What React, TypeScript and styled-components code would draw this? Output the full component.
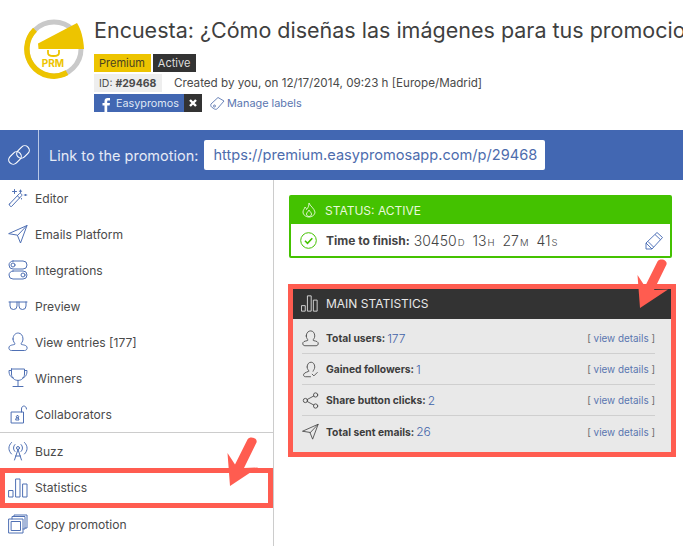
import React from 'react'
import styled, { createGlobalStyle } from 'styled-components'

const GlobalStyle = createGlobalStyle`
    html, body {
        margin: 0;
        padding: 0;
        background: #fff;
        overflow: hidden;
    }
    body {
        font-family: "Inter", "Liberation Sans", sans-serif;
        color: #444;
    }
`

const BLUE = '#4267b2'
const RED = '#ff5c50'

const Page = styled.div`
    position: relative;
    width: 683px;
    height: 546px;
    overflow: hidden;
`

const Header = styled.header`
    height: 130px;
    box-sizing: border-box;
    padding: 19px 0 0 24px;
    display: flex;
    gap: 10px;
`

const HeaderInfo = styled.div`
    min-width: 0;
    flex: 1;
    display: flex;
    flex-direction: column;
    align-items: flex-start;
`

const Title = styled.h1`
    margin: 0 0 12px;
    height: 23px;
    font-size: 21.5px;
    line-height: 23px;
    font-weight: 400;
    color: #3f3f3f;
    white-space: nowrap;
`

const BadgeRow = styled.div`
    display: flex;
    align-items: center;
    gap: 2px;
    height: 18px;
    margin-bottom: 2px;
`

const Badge = styled.span<{ $bg: string; $fg: string }>`
    height: 18px;
    padding: 0 6px 0 5px;
    display: flex;
    align-items: center;
    font-size: 11px;
    background: ${({ $bg }) => $bg};
    color: ${({ $fg }) => $fg};
`

const MetaRow = styled.div`
    display: flex;
    align-items: center;
    height: 18px;
    margin-bottom: 2px;
    font-size: 11.65px;
    color: #4a4a4a;
`

const IdChip = styled.span`
    height: 18px;
    width: 68px;
    box-sizing: border-box;
    padding-left: 5px;
    margin-right: 12px;
    display: flex;
    align-items: center;
    gap: 3px;
    background: #eee;
    font-size: 10.5px;
    b {
        font-weight: 700;
    }
`

const LabelRow = styled.div`
    display: flex;
    align-items: center;
    height: 18px;
`

const FbLabel = styled.span`
    width: 90px;
    height: 18px;
    box-sizing: border-box;
    background: ${BLUE};
    color: #dfe6f4;
    font-size: 10.8px;
    display: flex;
    align-items: center;
    gap: 6px;
    padding-left: 8px;
    overflow: hidden;
    svg {
        align-self: flex-end;
    }
`

const CloseLabel = styled.span`
    width: 18px;
    height: 18px;
    background: #333;
    display: flex;
    align-items: center;
    justify-content: center;
`

const ManageLabels = styled.a`
    margin-left: 8px;
    display: flex;
    align-items: center;
    gap: 2px;
    font-size: 10.9px;
    color: #5a76b0;
`

const LinkBar = styled.div`
    height: 50px;
    background: ${BLUE};
    display: flex;
    align-items: center;
    color: #e6ebf6;
`

const LinkIconCell = styled.div`
    width: 39px;
    height: 50px;
    box-sizing: border-box;
    border-right: 1px solid #b9c8e6;
    display: flex;
    align-items: center;
    justify-content: center;
    flex: none;
`

const LinkLabel = styled.span`
    margin-left: 10px;
    font-size: 14.5px;
    white-space: nowrap;
`

const LinkUrl = styled.span`
    margin-left: 6px;
    height: 30px;
    width: 341px;
    box-sizing: border-box;
    padding-left: 9px;
    border-radius: 2px;
    background: #fff;
    color: #4d6cad;
    font-size: 14.6px;
    display: flex;
    align-items: center;
    white-space: nowrap;
`

const Body = styled.div`
    display: flex;
    height: 366px;
`

const Sidebar = styled.nav`
    width: 274px;
    box-sizing: border-box;
    flex: none;
    border-right: 1px solid #ccc;
`

const MenuGroup = styled.div`
    border-bottom: 1px solid #ccc;
`

const MenuItem = styled.div<{ $active?: boolean }>`
    height: 36px;
    box-sizing: border-box;
    padding-left: 8px;
    display: flex;
    align-items: center;
    gap: 7px;
    font-size: 12.1px;
    color: #4a4a4a;
    svg {
        flex: none;
    }
    ${({ $active }) => $active && `
        position: relative;
        height: 40px;
        margin: -1px 0 -2px;
        border: 5px solid ${RED};
        padding: 0 0 1px 3px;
    `}
`

const Main = styled.main`
    flex: 1;
    min-width: 0;
    padding: 15px 0 0 15px;
`

const StatusCard = styled.section`
    width: 383px;
    height: 63px;
    box-sizing: border-box;
    border: 2px solid #44c200;
    border-radius: 2px;
    margin-bottom: 26px;
`

const StatusHead = styled.div`
    height: 28px;
    margin: -1px 0 0;
    background: #44c200;
    color: #e8f8dc;
    font-size: 12px;
    display: flex;
    align-items: center;
    gap: 9px;
    padding-left: 11px;
`

const StatusBody = styled.div`
    height: 32px;
    display: flex;
    align-items: center;
    padding: 0 6px 0 9px;
    color: #444;
`

const FinishLabel = styled.b`
    margin-left: 9px;
    font-size: 12px;
    font-weight: 700;
    margin-right: 4px;
`

const Count = styled.span`
    font-size: 14px;
    font-weight: 300;
    margin-right: 8px;
    small {
        font-size: 9.5px;
        margin-left: 1px;
    }
`

const EditBtn = styled.span`
    margin-left: auto;
    display: flex;
`

const StatsCard = styled.section`
    width: 388px;
    height: 173px;
    margin-left: -1px;
    box-sizing: border-box;
    border: 5px solid ${RED};
    background: #e9e9e9;
`

const StatsHead = styled.div`
    height: 29px;
    padding-bottom: 1px;
    background: #333;
    color: #e8e8e8;
    font-size: 12px;
    display: flex;
    align-items: center;
    gap: 8px;
    padding-left: 8px;
`

const StatsList = styled.div`
    padding: 4px 16px 0 9px;
`

const StatRow = styled.div`
    height: 31px;
    box-sizing: border-box;
    display: flex;
    align-items: center;
    gap: 7px;
    border-bottom: 1px solid #cfcfcf;
    &:last-child {
        border-bottom: none;
    }
`

const StatLabel = styled.b`
    font-size: 10.3px;
    font-weight: 700;
    color: #3d3d3d;
`

const StatValue = styled.span`
    margin-left: -5px;
    font-size: 12px;
    font-weight: 300;
    color: #3f62a8;
`

const Details = styled.span`
    margin-left: auto;
    font-size: 9.9px;
    color: #6a6a6a;
    a {
        color: #5a76b0;
    }
`

const ArrowMark = styled.svg<{ $left: number; $top: number }>`
    position: absolute;
    left: ${({ $left }) => $left}px;
    top: ${({ $top }) => $top}px;
`

type IconProps = { size?: number; color?: string }

const Line = ({ size = 20, color = '#4f70b4', children }: IconProps & { children: React.ReactNode }) => (
    <svg width={size} height={size} viewBox="0 0 20 20" fill="none" stroke={color} strokeWidth="1" strokeLinecap="round" strokeLinejoin="round">
        {children}
    </svg>
)

const Wand = () => (
    <Line>
        <path d="M1.500 16 11.500 5.500c1-.8 3 1 2.200 2.200L3.500 18.500c-1 .6-2.700-1.400-2-2.500Z" />
        <path d="M9.500 8l2.200 2M6.500 1.500v4M4.500 3.500h4M12.500 2v2.500M11.300 3.200h2.400M17.500 6.500v1M18.800 7h-2.600M13.500 10.500v.5" />
    </Line>
)
const Plane = ({ size, color }: IconProps) => (
    <Line size={size} color={color}>
        <path d="M1 9.500 19 1.500 12.500 19 9.500 11.500Z" />
        <path d="M19 1.500 9.500 11.500" />
    </Line>
)
const Toggles = () => (
    <Line>
        <rect x="1" y="1" width="18" height="8" rx="4" />
        <rect x="1" y="11" width="18" height="8" rx="4" />
        <circle cx="5" cy="5" r="2" />
        <circle cx="15" cy="15" r="2" />
    </Line>
)
const Glasses = () => (
    <Line>
        <path d="M1 6h18M2 6v4a3.500 3.500 0 0 0 7 0V6M11 6v4a3.500 3.500 0 0 0 7 0V6" />
    </Line>
)
const User = ({ size, color }: IconProps) => (
    <Line size={size} color={color}>
        <path d="M5 7c0-8 10-8 10 0 0 3-2 4-2 5 0 1 5 .5 6 3 .5 2.500-1 3.500-2.500 3.500h-13C2 18.500.5 17.500 1 15c1-2.500 6-2 6-3 0-1-2-2-2-5Z" />
    </Line>
)
const UserCheck = ({ size, color }: IconProps) => (
    <Line size={size} color={color}>
        <path d="M6 7c0-7.500 9-7.500 9 0 0 2.500-1.500 3.500-2 5M8 12c0 1-5 1-6 3.500-.5 2 .5 3 2 3h6M8 12c0-1.500-2-2-2-5" />
        <path d="M12 15.500l2 2 4-4" />
    </Line>
)
const Share = ({ size, color }: IconProps) => (
    <Line size={size} color={color}>
        <circle cx="4" cy="10" r="2.500" />
        <circle cx="16" cy="3.500" r="2.500" />
        <circle cx="16" cy="16.500" r="2.500" />
        <path d="M6.200 8.800 13.800 4.700M6.200 11.200l7.600 4.100" />
    </Line>
)
const Trophy = () => (
    <Line>
        <path d="M3.500 1h13v5c0 8.500-13 8.500-13 0V1ZM3.500 2.500H1c0 4 1 6.500 4.500 7.500M16.500 2.500H19c0 4-1 6.500-4.500 7.500M10 12.500V18M5 18.500h10" />
    </Line>
)
const Lock = () => (
    <Line>
        <rect x="3.500" y="8" width="12" height="11" />
        <path d="M13.500 8V5c0-4 5-4 5 0M9.500 11.500a1.200 1.200 0 1 1 0 2.500 1.200 1.200 0 0 1 0-2.500ZM8 16h3l-.7-2.200H8.700Z" />
    </Line>
)
const Antenna = () => (
    <Line>
        <circle cx="10" cy="7" r="1.500" />
        <path d="M10 8.500 6.500 19M10 8.500l3.500 10.500M7.500 15h5M7 3.500c-2 2-2 5 0 7M13 3.500c2 2 2 5 0 7M3.500 1.500c-3.500 3.500-3.500 8 0 11.500M16.500 1.500c3.500 3.500 3.500 8 0 11.500" />
    </Line>
)
const Bars = ({ size, color }: IconProps) => (
    <Line size={size} color={color}>
        <rect x="1" y="12.500" width="4" height="6.500" />
        <rect x="8" y="1" width="4" height="18" />
        <rect x="15" y="6" width="4" height="13" />
    </Line>
)
const Copy = () => (
    <Line>
        <rect x="1" y="5" width="14" height="14" />
        <rect x="3.500" y="7.500" width="9" height="9" />
        <path d="M4 5V2.500h13V15h-2M6 2V1h13v13h-2" />
    </Line>
)

const Logo = () => (
    <svg width="60" height="60" viewBox="0 0 60 60" fill="none">
        <circle cx="30" cy="30" r="27" stroke="#c9c9c9" strokeWidth="5" />
        <path d="M11 10.800A27 27 0 0 0 43 53.700" stroke="#edc400" strokeWidth="5.500" />
        <path d="M24 31v3c0 4 11 4 11 0v-3" stroke="#edc400" strokeWidth="1.800" />
        <path d="M14 24.500 53 4c4 6 6.500 16 7 26H14.500Z" fill="#edc400" />
        <text x="29" y="48" textAnchor="middle" fontFamily="Inter, sans-serif" fontSize="10" fontWeight="700" fill="#edc400">PRM</text>
    </svg>
)

const menuTop = [
    { icon: <Wand />, label: 'Editor' },
    { icon: <Plane />, label: 'Emails Platform' },
    { icon: <Toggles />, label: 'Integrations' },
    { icon: <Glasses />, label: 'Preview' },
    { icon: <User />, label: 'View entries [177]' },
    { icon: <Trophy />, label: 'Winners' },
    { icon: <Lock />, label: 'Collaborators' },
]

const stats = [
    { icon: <User size={17} color="#444" />, label: 'Total users:', value: '177' },
    { icon: <UserCheck size={17} color="#444" />, label: 'Gained followers:', value: '1' },
    { icon: <Share size={17} color="#444" />, label: 'Share button clicks:', value: '2' },
    { icon: <Plane size={17} color="#444" />, label: 'Total sent emails:', value: '26' },
]

const arrow = 'M2.500 18 10 29.500 22.500 4.500C25 .5 33 3 31.500 7.500L19 33l14-.5L5 51Z'

export default function App() {
    return (
        <Page>
            <GlobalStyle />
            <Header>
                <Logo />
                <HeaderInfo>
                    <Title>Encuesta: ¿Cómo diseñas las imágenes para tus promociones?</Title>
                    <BadgeRow>
                        <Badge $bg="#edc400" $fg="#4a4220">Premium</Badge>
                        <Badge $bg="#333" $fg="#ddd">Active</Badge>
                    </BadgeRow>
                    <MetaRow>
                        <IdChip>ID: <b>#29468</b></IdChip>
                        Created by you, on 12/17/2014, 09:23 h [Europe/Madrid]
                    </MetaRow>
                    <LabelRow>
                        <FbLabel>
                            <svg width="8" height="14" viewBox="0 0 8 14" fill="#fff">
                                <path d="M2.500 14V7.500H.5V5h2V3.200C2.500 1.200 3.700 0 5.500 0H8v2.500H6.200c-.7 0-1 .3-1 1V5H8l-.4 2.500H5.200V14Z" />
                            </svg>
                            Easypromos
                        </FbLabel>
                        <CloseLabel>
                            <svg width="8" height="8" viewBox="0 0 8 8" stroke="#fff" strokeWidth="2.400">
                                <path d="M1 1l6 6M7 1 1 7" />
                            </svg>
                        </CloseLabel>
                        <ManageLabels>
                            <svg width="15" height="14" viewBox="0 0 15 14" fill="none" stroke="#5a76b0" strokeWidth="0.9">
                                <path d="M1 8 8 1.500l6 3.500-6.500 7.500c-1 1-2 1-3 .5L1.500 11C.8 10.300.5 9 1 8Z" />
                                <circle cx="4.500" cy="10" r="1" />
                            </svg>
                            Manage labels
                        </ManageLabels>
                    </LabelRow>
                </HeaderInfo>
            </Header>
            <LinkBar>
                <LinkIconCell>
                    <svg width="26" height="26" viewBox="0 0 26 26" fill="none" stroke="#fff" strokeWidth="1.200">
                        <rect x="12.500" y="3" width="9" height="14" rx="4.500" transform="rotate(45 17 10)" />
                        <rect x="4.500" y="9" width="9" height="14" rx="4.500" transform="rotate(45 9 16)" />
                    </svg>
                </LinkIconCell>
                <LinkLabel>Link to the promotion:</LinkLabel>
                <LinkUrl>https://premium.easypromosapp.com/p/29468</LinkUrl>
            </LinkBar>
            <Body>
                <Sidebar>
                    <MenuGroup>
                        {menuTop.map(item => (
                            <MenuItem key={item.label}>{item.icon}{item.label}</MenuItem>
                        ))}
                    </MenuGroup>
                    <MenuItem><Antenna />Buzz</MenuItem>
                    <MenuItem $active><Bars />Statistics</MenuItem>
                    <MenuItem><Copy />Copy promotion</MenuItem>
                </Sidebar>
                <Main>
                    <StatusCard>
                        <StatusHead>
                            <svg width="14" height="16" viewBox="0 0 14 16" fill="none" stroke="#e8f8dc" strokeWidth="0.9">
                                <path d="M7 1c1 3 5 5 6 9 0 3-3 5-6 5s-6-2-6-5c0-2 1.500-3 2-5 1 1 1.500 1.500 1.500 2.500C6 6 7 4 7 1Z" />
                                <path d="M7 8c.5 1.500 2.500 2.500 2.500 4 0 1.500-1 2.500-2.500 2.500S4.500 13.500 4.500 12c0-1.500 2-2.500 2.500-4Z" />
                            </svg>
                            STATUS: ACTIVE
                        </StatusHead>
                        <StatusBody>
                            <svg width="17" height="17" viewBox="0 0 17 17" fill="none" stroke="#44c200" strokeWidth="1">
                                <circle cx="8.500" cy="8.500" r="7.800" />
                                <path d="M5 8.800l2.500 2.500 4.800-5" strokeWidth="1.600" />
                            </svg>
                            <FinishLabel>Time to finish:</FinishLabel>
                            <Count>30450<small>D</small></Count>
                            <Count>13<small>H</small></Count>
                            <Count>27<small>M</small></Count>
                            <Count>41<small>S</small></Count>
                            <EditBtn>
                                <svg width="19" height="19" viewBox="0 0 19 19" fill="none" stroke={BLUE} strokeWidth="0.9">
                                    <path d="M1 12 12 1.500l5.500 5L7 18H1v-6ZM3 10.500 8.500 16M1 12l6 6M10 3.500l5.500 5.200" />
                                </svg>
                            </EditBtn>
                        </StatusBody>
                    </StatusCard>
                    <StatsCard>
                        <StatsHead>
                            <Bars size={17} color="#e8e8e8" />
                            MAIN STATISTICS
                        </StatsHead>
                        <StatsList>
                            {stats.map(stat => (
                                <StatRow key={stat.label}>
                                    {stat.icon}
                                    <StatLabel>{stat.label}</StatLabel>
                                    <StatValue>{stat.value}</StatValue>
                                    <Details>[ <a>view details</a> ]</Details>
                                </StatRow>
                            ))}
                        </StatsList>
                    </StatsCard>
                </Main>
            </Body>
            <ArrowMark $left={225} $top={435} width="34" height="52" viewBox="0 0 34 52"><path d={arrow} fill={RED} /></ArrowMark>
            <ArrowMark $left={635} $top={257} width="34" height="52" viewBox="0 0 34 52"><path d={arrow} fill={RED} /></ArrowMark>
        </Page>
    )
}
